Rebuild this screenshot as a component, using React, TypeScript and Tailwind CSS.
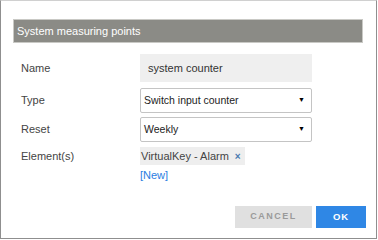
export default function App() {
  const font = { fontFamily: '"Liberation Sans", Arial, sans-serif' };

  return (
    <div
      className="w-[378px] h-[240px] bg-white text-[11px] text-[#444]"
      style={font}
    >
      <div className="w-[377px] h-[239px] border-x border-b border-t border-x-[#8f8f8f] border-b-[#8f8f8f] border-t-[#d0d0d0] flex flex-col">
        {/* Header */}
        <div className="mt-[18px] ml-[12px] mr-[13px] h-[24px] bg-[#8b8b86] border border-[#c9c9c5] flex items-center pl-[3px] text-white text-[11px]">
          System measuring points
        </div>

        {/* Form */}
        <div className="mt-[11px] flex flex-col">
          <div className="flex items-center h-[28px]">
            <div className="w-[139px] pl-[20px]">Name</div>
            <div className="w-[172px] h-[28px] bg-[#efefef] flex items-center pl-[8px] text-[#333]">
              system counter
            </div>
          </div>

          <div className="flex items-center h-[25px] mt-[6px]">
            <div className="w-[139px] pl-[20px]">Type</div>
            <div className="w-[172px] h-[25px] border border-[#c4c4c4] rounded-[2px] flex items-center justify-between pl-[3px] pr-[6px] text-[#222] text-[10.5px]">
              <span>Switch input counter</span>
              <span className="text-[7px] text-black">▼</span>
            </div>
          </div>

          <div className="flex items-center h-[25px] mt-[4px]">
            <div className="w-[139px] pl-[20px]">Reset</div>
            <div className="w-[172px] h-[25px] border border-[#c4c4c4] rounded-[2px] flex items-center justify-between pl-[3px] pr-[6px] text-[#222] text-[10.5px]">
              <span>Weekly</span>
              <span className="text-[7px] text-black">▼</span>
            </div>
          </div>

          <div className="flex items-start mt-[5px]">
            <div className="w-[139px] pl-[20px] h-[18px] flex items-center">Element(s)</div>
            <div className="flex flex-col items-start">
              <div className="h-[18px] bg-[#eeeeee] flex items-center pl-[1px] pr-[4px] gap-[6px]">
                <span className="text-[#444]">VirtualKey - Alarm</span>
                <span className="text-[#4a7bb0] text-[10px] font-bold">×</span>
              </div>
              <span className="mt-[2px] text-[#2a7de1]">[New]</span>
            </div>
          </div>
        </div>

        {/* Buttons */}
        <div className="mt-auto mb-[10px] mr-[10px] flex justify-end gap-[4px]">
          <button className="w-[77px] h-[22px] bg-[#e0e0e0] text-[#9a9a9a] text-[9px] font-bold tracking-[1.5px]">
            CANCEL
          </button>
          <button className="w-[50px] h-[22px] bg-[#2f87e5] text-white text-[9.5px] font-bold tracking-[1px]">
            OK
          </button>
        </div>
      </div>
    </div>
  );
}
